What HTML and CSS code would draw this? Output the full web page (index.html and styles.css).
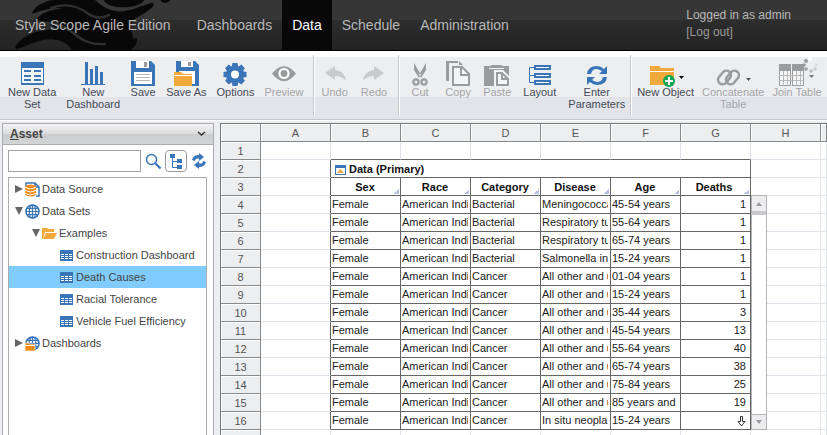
FILE: index.html
```html
<!DOCTYPE html>
<html lang="en">
<head>
<meta charset="utf-8">
<title>Style Scope Agile Edition</title>
<link rel="stylesheet" href="styles.css">
</head>
<body>
<svg class="defs" aria-hidden="true">
  <symbol id="sheet" viewBox="0 0 13 11"><path fill="#3a75b8" d="M0 0h13v11H0z"/><path stroke="#fff" d="M1 4.5h11M1 6.5h11M1 8.5h11" /><path stroke="#3a75b8" d="M4.5 4v6M8.500 4v6"/></symbol>
  <symbol id="globe" viewBox="0 0 15 15"><circle cx="7.500" cy="7.500" r="6.500" fill="#fff" stroke="#3a75b8" stroke-width="1.600"/><path fill="none" stroke="#3a75b8" stroke-width="1.200" d="M7.500 1v13M1 7.500h13M2 4.300h11M2 10.700h11"/><ellipse cx="7.500" cy="7.500" rx="3.300" ry="6.500" fill="none" stroke="#3a75b8" stroke-width="1.200"/></symbol>
</svg>

<header class="top">
  <svg class="emblem" width="180" height="50" viewBox="0 0 540 150" aria-hidden="true">
    <path d="M97 36C112 10 145 0 182-4L280-4C296 10 322 32 352 34C392 36 428 14 456 8C466 10 462 20 452 26C430 44 408 52 398 62C390 80 396 98 400 116L411 114C414 130 402 142 392 150L216 150C206 134 188 120 156 118C112 118 84 138 52 147C44 148 44 140 50 134C70 108 104 90 170 88C150 66 124 58 104 64C120 38 152 28 186 26C156 22 126 32 104 39C98 40 95 40 97 36Z"/>
    <path d="M310-4C312 14 340 22 370 22C404 22 430 12 434-4ZM480-2C484 12 506 12 512-2Z"/>
    <path class="streak" d="M150 25C200 6 240 22 266 42C288 58 310 54 330 44M104 72C150 62 190 76 216 96C244 120 270 136 318 132"/>
  </svg>
  <span class="brand">Style Scope Agile Edition</span>
  <nav class="menu">
    <a href="#">Dashboards</a><a href="#" class="current">Data</a><a href="#">Schedule</a><a href="#">Administration</a>
  </nav>
  <div class="account"><span>Logged in as admin</span><a href="#">[Log out]</a></div>
</header>

<div class="toolbar" role="toolbar">
  <div class="group file">
    <button class="tool" type="button"><svg width="24" height="26" viewBox="0 0 24 26"><path fill="#3a75b8" d="M1 2h23v23H1z"/><path fill="#f3f5f7" d="M2 8h21v15H2z"/><path stroke="#3a75b8" stroke-width="2" d="M4 11h7M14 11h7M4 16h7M14 16h7M4 20h7M14 20h7"/></svg>New Data<br>Set</button>
    <button class="tool" type="button"><svg width="26" height="26" viewBox="0 0 26 26"><path fill="#3a75b8" d="M1 24h24v1H1zM5 2h3v22H5zM10 9h3v15h-3zM15 6h3v18h-3zM20 12h3v12h-3z"/></svg>New<br>Dashboard</button>
    <button class="tool" type="button"><svg width="26" height="26" viewBox="0 0 26 26"><path fill="#3a75b8" d="M1 1h20l4 4v21H1z"/><path fill="#fff" d="M6 1h13v7H6zM4 12h18v12H4z"/><path fill="#999" d="M14 2h3v5h-3z"/><path stroke="#b5b7b8" d="M6 14.500h14M6 17.500h14M6 20.500h14"/></svg>Save</button>
    <button class="tool" type="button"><svg width="26" height="26" viewBox="0 0 26 26"><path fill="#3a75b8" d="M3 1h19l4 4v21H3z"/><path fill="#fff" d="M8 1h12v6H8zM6 11h16v13H6z"/><path fill="#999" d="M15 2h3v4h-3z"/><path fill="#f2a93b" d="M1 12h7l2 2h9v12H1z"/><path stroke="#fff" d="M1 15.500h18"/></svg>Save As</button>
    <button class="tool" type="button"><svg width="24" height="26" viewBox="0 0 24 26"><g fill="#3a75b8"><circle cx="12" cy="14.500" r="8.500"/><path id="cog" d="M9.500 3h5l1 5h-7zM9.500 26h5l1-5h-7z"/><use href="#cog" transform="rotate(45 12 14.500)"/><use href="#cog" transform="rotate(90 12 14.500)"/><use href="#cog" transform="rotate(135 12 14.500)"/></g><circle cx="12" cy="14.500" r="4" fill="#fff"/></svg>Options</button>
    <button class="tool" type="button" disabled><svg width="24" height="26" viewBox="0 0 24 26"><path fill="#999b9c" d="M0 13.500Q12-1 24 13.500Q12 29 0 13.500z"/><circle cx="12" cy="13.500" r="4.500" fill="none" stroke="#fff" stroke-width="2.200"/></svg>Preview</button>
  </div>
  <div class="group history">
    <button class="tool" type="button" disabled><svg width="24" height="26" viewBox="0 0 24 26"><path id="bend" fill="#c9cacc" d="M2 13L12 6v4q10 1 11 11q-4-5-11-5v4z"/></svg>Undo</button>
    <button class="tool" type="button" disabled><svg width="24" height="26" viewBox="0 0 24 26"><use href="#bend" transform="matrix(-1 0 0 1 24 0)"/></svg>Redo</button>
  </div>
  <div class="group edit">
    <button class="tool" type="button" disabled><svg width="18" height="26" viewBox="0 0 18 26"><path fill="#999b9c" d="M3 3l7 12-2 3-5-8zM15 3L8 15l2 3 5-8z"/><g fill="none" stroke="#999b9c" stroke-width="2.200"><circle cx="5" cy="22" r="2.600"/><circle cx="13" cy="22" r="2.600"/></g></svg>Cut</button>
    <button class="tool" type="button" disabled><svg width="26" height="26" viewBox="0 0 26 26"><path fill="#999b9c" d="M1 1h12v2H4v18H1zM14 1l4 4h-4z"/><path fill="#f3f4f5" stroke="#999b9c" stroke-width="2" d="M8 7h9l7 7v11H8z"/><path fill="none" stroke="#999b9c" stroke-width="2" d="M16 6v9h9"/></svg>Copy</button>
    <button class="tool" type="button" disabled><svg width="26" height="26" viewBox="0 0 26 26"><path fill="#999b9c" d="M0 6h6l2-1h9l2 1h6v20H0z"/><path stroke="#f3f4f5" d="M5 8.500h15"/><path fill="#f3f4f5" d="M10 10h9l7 7v9H10z"/><path fill="#f3f4f5" stroke="#999b9c" stroke-width="2" d="M13 13h5l6 6v6H13z"/><path fill="none" stroke="#999b9c" stroke-width="2" d="M18 13v6h6"/></svg>Paste</button>
    <button class="tool" type="button"><svg width="24" height="26" viewBox="0 0 24 26"><g fill="#fff" stroke="#3a75b8" stroke-width="2"><path d="M7 6h15v3H7zM7 14h15v3H7zM7 21h15v3H7z"/></g><path fill="none" stroke="#3a75b8" d="M6 7.500H1.500v15H6M2 15.500h4"/></svg>Layout</button>
    <button class="tool" type="button"><svg width="24" height="26" viewBox="0 0 24 26"><path id="swirl" fill="#3a75b8" d="M2 14Q3 6 12 6q4 0 7 3l3-3v8h-8l3-3q-9-5-11 3z"/><use href="#swirl" transform="rotate(180 12 15.500)"/></svg>Enter<br>Parameters</button>
  </div>
  <div class="group objects">
    <button class="tool" type="button"><svg width="36" height="26" viewBox="0 0 36 26"><path fill="#f2a93b" d="M2 6h9l2 2h13v17H2z"/><path stroke="#fff" d="M2 11.500h24"/><circle cx="21" cy="21" r="6" fill="#0aa64f"/><path stroke="#fff" stroke-width="2" d="M17 21h8M21 17v8"/><path d="M31 16h5l-2.500 3z"/></svg>New Object</button>
    <button class="tool" type="button" disabled><svg width="36" height="26" viewBox="0 0 36 26"><g fill="none" stroke="#999b9c" stroke-width="2.500"><rect x="2" y="13" width="15" height="9" rx="4.500" transform="rotate(-50 9.500 17.500)"/><rect x="10" y="13" width="15" height="9" rx="4.500" transform="rotate(-50 17.500 17.500)"/></g><path fill="#555" d="M31 18h5l-2.500 3z"/></svg>Concatenate<br>Table</button>
    <button class="tool" type="button" disabled><svg width="36" height="26" viewBox="0 0 36 26"><path fill="#999b9c" d="M0 4h12v22H0zM13 4h12v22H13z"/><path fill="#f5f5f5" d="M1 11h10v14H1zM14 11h10v14H14z"/><path stroke="#b6b8b9" d="M4.500 11v15M8.500 11v15M17.500 11v15M21.500 11v15M0 15.500h25M0 20.500h25"/><path fill="#777" d="M30 15h5l-2.500 3z"/><g fill="#999b9c"><circle cx="27" cy="1" r="2"/><circle cx="25" cy="5" r="1.800"/><circle cx="27" cy="9" r="1.800"/><circle cx="32" cy="11" r="1.800" fill="#bbb"/><circle cx="36" cy="9" r="1.800" fill="#ccc"/><circle cx="37" cy="5" r="1.800" fill="#ddd"/><circle cx="31" cy="-1" r="2" fill="#fff"/></g></svg>Join Table</button>
  </div>
</div>

<main class="work">
  <aside class="asset">
    <h2 class="asset-title"><span><u>A</u>sset</span><svg width="9" height="6" viewBox="0 0 9 6" aria-hidden="true"><path fill="none" stroke="#333" stroke-width="1.500" d="M1 1l3.500 3L8 1"/></svg></h2>
    <div class="asset-body">
      <form class="search">
        <input type="text" aria-label="Search assets">
        <button type="button" class="icon-btn" aria-label="Search"><svg width="17" height="17" viewBox="0 0 17 17"><circle cx="6.500" cy="6.500" r="5" fill="none" stroke="#3a75b8" stroke-width="1.500"/><path stroke="#3a75b8" stroke-width="2.200" d="M10.500 10.500l5 5"/></svg></button>
        <button type="button" class="icon-btn framed" aria-label="Tree view"><svg width="16" height="16" viewBox="0 0 16 16"><path fill="#3a75b8" d="M2 1h5v4H2zM9 6h5v4H9zM9 12h5v4H9z"/><path fill="none" stroke="#3a75b8" d="M4.500 5v9.500H9M4.500 8.500H9"/></svg></button>
        <button type="button" class="icon-btn" aria-label="Refresh"><svg width="16" height="16" viewBox="0 0 16 16"><path id="spin" fill="#3a75b8" d="M1 7Q2 2 8 2V0l5 4-5 4V5.500Q4 5 4 8z"/><use href="#spin" transform="rotate(180 8 8)"/></svg></button>
      </form>
      <ul class="tree">
        <li><svg class="twist" viewBox="0 0 8 8"><path d="M0 0l8 4-8 4z"/></svg><svg class="kind" viewBox="0 0 15 15"><path fill="#fff" stroke="#3a75b8" stroke-width="1.500" d="M1 4V1h9l4 4v9h-3M10 1v4h4"/><path fill="#f08a13" d="M0 4q5-3 11 0v9q-5 3-11 0z"/><path fill="none" stroke="#fff" d="M0 5.500q5 3 11 0M0 8.500q5 3 11 0M0 11.500q5 3 11 0"/></svg>Data Source</li>
        <li><svg class="twist" viewBox="0 0 8 8"><path d="M0 0h8L4 8z"/></svg><svg class="kind"><use href="#globe"/></svg>Data Sets</li>
        <li class="level2"><svg class="twist" viewBox="0 0 8 8"><path d="M0 0h8L4 8z"/></svg><svg class="kind" viewBox="0 0 15 15"><path fill="#f2a93b" d="M0 2h5l1 1h6v3H3l-2 7H0z"/><path fill="#f2a93b" d="M4 7h11l-3 6H1z"/></svg>Examples</li>
        <li class="level3"><svg class="leaf"><use href="#sheet"/></svg>Construction Dashboard</li>
        <li class="level3 selected"><svg class="leaf"><use href="#sheet"/></svg>Death Causes</li>
        <li class="level3"><svg class="leaf"><use href="#sheet"/></svg>Racial Tolerance</li>
        <li class="level3"><svg class="leaf"><use href="#sheet"/></svg>Vehicle Fuel Efficiency</li>
        <li><svg class="twist" viewBox="0 0 8 8"><path d="M0 0l8 4-8 4z"/></svg><svg class="kind" viewBox="0 0 15 15"><use href="#globe"/><path fill="#f08a13" stroke="#fff" stroke-width=".6" d="M0 7h4l1 1h5v7H0z"/><path stroke="#fff" d="M0 9.500h10"/></svg>Dashboards</li>
      </ul>
    </div>
  </aside>

  <section class="sheet">
    <table>
      <colgroup><col class="num"><col class="c"><col class="c"><col class="c"><col class="c"><col class="c"><col class="c"><col class="c"><col class="c"><col></colgroup>
      <thead><tr><th></th><th>A</th><th>B</th><th>C</th><th>D</th><th>E</th><th>F</th><th>G</th><th>H</th><th></th></tr></thead>
      <tbody>
        <tr class="above"><th>1</th><td></td><td></td><td></td><td></td><td></td><td></td><td></td><td></td><td></td></tr>
        <tr class="data"><th>2</th><td></td><td colspan="6" class="caption"><svg width="11" height="10" viewBox="0 0 11 10"><path fill="#3a75b8" d="M0 0h11v10H0z"/><path fill="#fff" d="M1 3h9v6H1z"/><path fill="#f2a93b" d="M2 8l3.500-4L9 8z"/></svg>Data (Primary)</td><td></td><td></td></tr>
        <tr class="data fields"><th>3</th><td></td><td>Sex</td><td>Race</td><td>Category</td><td>Disease</td><td>Age</td><td>Deaths</td><td></td><td></td></tr>
        <tr class="data"><th>4</th><td></td><td><div>Female</div></td><td><div>American Indi</div></td><td><div>Bacterial</div></td><td><div>Meningococca</div></td><td><div>45-54 years</div></td><td><div>1</div></td><td class="rail"><div class="scroll"><button type="button" aria-label="Scroll up"><svg width="6" height="4" viewBox="0 0 6 4"><path fill="#999" d="M0 4l3-4 3 4z"/></svg></button><button type="button" aria-label="Scroll down"><svg width="6" height="4" viewBox="0 0 6 4"><path fill="#999" d="M0 0h6L3 4z"/></svg></button></div></td><td></td></tr>
        <tr class="data"><th>5</th><td></td><td><div>Female</div></td><td><div>American Indi</div></td><td><div>Bacterial</div></td><td><div>Respiratory tu</div></td><td><div>55-64 years</div></td><td><div>1</div></td><td></td><td></td></tr>
        <tr class="data"><th>6</th><td></td><td><div>Female</div></td><td><div>American Indi</div></td><td><div>Bacterial</div></td><td><div>Respiratory tu</div></td><td><div>65-74 years</div></td><td><div>1</div></td><td></td><td></td></tr>
        <tr class="data"><th>7</th><td></td><td><div>Female</div></td><td><div>American Indi</div></td><td><div>Bacterial</div></td><td><div>Salmonella inf</div></td><td><div>15-24 years</div></td><td><div>1</div></td><td></td><td></td></tr>
        <tr class="data"><th>8</th><td></td><td><div>Female</div></td><td><div>American Indi</div></td><td><div>Cancer</div></td><td><div>All other and u</div></td><td><div>01-04 years</div></td><td><div>1</div></td><td></td><td></td></tr>
        <tr class="data"><th>9</th><td></td><td><div>Female</div></td><td><div>American Indi</div></td><td><div>Cancer</div></td><td><div>All other and u</div></td><td><div>15-24 years</div></td><td><div>1</div></td><td></td><td></td></tr>
        <tr class="data"><th>10</th><td></td><td><div>Female</div></td><td><div>American Indi</div></td><td><div>Cancer</div></td><td><div>All other and u</div></td><td><div>35-44 years</div></td><td><div>3</div></td><td></td><td></td></tr>
        <tr class="data"><th>11</th><td></td><td><div>Female</div></td><td><div>American Indi</div></td><td><div>Cancer</div></td><td><div>All other and u</div></td><td><div>45-54 years</div></td><td><div>13</div></td><td></td><td></td></tr>
        <tr class="data"><th>12</th><td></td><td><div>Female</div></td><td><div>American Indi</div></td><td><div>Cancer</div></td><td><div>All other and u</div></td><td><div>55-64 years</div></td><td><div>40</div></td><td></td><td></td></tr>
        <tr class="data"><th>13</th><td></td><td><div>Female</div></td><td><div>American Indi</div></td><td><div>Cancer</div></td><td><div>All other and u</div></td><td><div>65-74 years</div></td><td><div>38</div></td><td></td><td></td></tr>
        <tr class="data"><th>14</th><td></td><td><div>Female</div></td><td><div>American Indi</div></td><td><div>Cancer</div></td><td><div>All other and u</div></td><td><div>75-84 years</div></td><td><div>25</div></td><td></td><td></td></tr>
        <tr class="data"><th>15</th><td></td><td><div>Female</div></td><td><div>American Indi</div></td><td><div>Cancer</div></td><td><div>All other and u</div></td><td><div>85 years and</div></td><td><div>19</div></td><td></td><td></td></tr>
        <tr class="data"><th>16</th><td></td><td><div>Female</div></td><td><div>American Indi</div></td><td><div>Cancer</div></td><td><div>In situ neoplas</div></td><td><div>15-24 years</div></td><td><div><svg width="9" height="12" viewBox="0 0 9 12"><path fill="#fff" stroke="#333" d="M3.500 1.500h2v5h2.500L4.500 11 1 6.500h2.500z"/></svg></div></td><td></td><td></td></tr>
        <tr><th></th><td></td><td></td><td></td><td></td><td></td><td></td><td></td><td></td><td></td></tr>
      </tbody>
    </table>
  </section>
</main>
</body>
</html>
```
FILE: styles.css
```css
* { box-sizing: border-box; }

body {
  margin: 0;
  height: 100vh;
  overflow: hidden;
  display: flex;
  flex-direction: column;
  background: #ecedf0;
  color: #333;
  font: 11px/12px "Liberation Sans", Arial, sans-serif;
}

button { font: inherit; color: inherit; border: 0; padding: 0; background: none; }
a { color: inherit; text-decoration: none; }
.defs { position: absolute; width: 0; height: 0; }

/* Top bar */
.top {
  position: relative;
  flex: none;
  display: flex;
  height: 51px;
  border-bottom: 1px solid #000;
  background: linear-gradient(#363636 0 40%, #2d2d2d 40%, #232323);
  color: #b8b8b8;
  font-size: 14px;
  line-height: 50px;
}
.emblem { position: absolute; left: 0; top: 0; fill: #080808; }
.streak { fill: none; stroke: #303030; stroke-width: 7; }
.brand { position: relative; padding: 0 16px 0 15px; }
.menu { display: flex; }
.menu a { padding: 0 10px; }
.menu .current { background: #080808; color: #fff; }
.account {
  display: flex;
  flex-direction: column;
  margin-left: auto;
  padding: 7px 36px 0 0;
  font-size: 12px;
  line-height: 17px;
}
.account a { color: #999; }

/* Toolbar */
.toolbar {
  flex: none;
  display: flex;
  height: 69px;
  padding-top: 4px;
  border-bottom: 1px solid #c6c6ca;
  background: linear-gradient(#fff 0 6px, #edeef0 6px 46px, #e3e4e9 46px);
}
.group {
  flex: none;
  display: flex;
  align-items: flex-start;
  height: 60px;
  padding: 5px 9px 0 8px;
  border-right: 1px solid #c6c6ca;
  box-shadow: 1px 0 #fff;
}
.file { gap: 10px; }
.history { gap: 13px; padding-right: 11px; }
.edit { gap: 12px; padding-right: 5px; }
.objects { gap: 8px; padding: 5px 0 0 6px; border: 0; box-shadow: none; }
.tool { min-width: 26px; white-space: nowrap; text-align: center; color: #444a58; }
.tool svg { display: block; margin: 0 auto; overflow: visible; }
.tool:disabled { color: #a4a5a8; }

/* Work area */
.work { flex: 1; min-height: 0; display: flex; gap: 6px; padding: 2px 0 0 2px; border-top: 1px solid #fff; overflow: hidden; }

.asset {
  flex: none;
  display: flex;
  flex-direction: column;
  width: 212px;
  border: 1px solid #aaabae;
  border-bottom: 0;
  background: #fff;
}
.asset-title {
  display: flex;
  justify-content: space-between;
  align-items: center;
  height: 21px;
  margin: 0;
  padding: 0 7px;
  border-bottom: 1px solid #aaabae;
  background: linear-gradient(#f4f4f5, #dadbdc 50%, #cbcccd 50%, #d3d4d5);
  font-size: 12px;
  color: #444;
}
.asset-body { flex: 1; display: flex; flex-direction: column; gap: 5px; padding: 5px 6px 0 5px; }
.search { display: flex; align-items: center; gap: 4px; margin: 0; }
.search input { flex: 1; min-width: 0; height: 22px; border: 1px solid #a2a3a5; background: #fff; font: inherit; }
.icon-btn { display: grid; place-items: center; width: 16px; height: 22px; }
.icon-btn svg { overflow: visible; }
.framed { width: 22px; border: 1px solid #9a9b9d; border-radius: 4px; }

.tree { flex: 1; margin: 0; padding: 0; list-style: none; border: 1px solid #aaabae; border-bottom: 0; }
.tree li { display: flex; align-items: center; gap: 2px; height: 22px; padding-left: 6px; color: #444; }
.tree .level2 { padding-left: 23px; }
.tree .level3 { padding-left: 51px; gap: 3px; }
.tree .selected { background: #80ccff; }
.twist { width: 8px; height: 8px; fill: #666; }
.kind { width: 15px; height: 15px; }
.leaf { width: 13px; height: 11px; }

/* Worksheet */
.sheet { flex: 1; min-width: 0; border: 1px solid #77787a; border-width: 1px 0 0 1px; background: #fff; }
table { width: 100%; table-layout: fixed; border-spacing: 0; }
.num { width: 40px; }
.c { width: 70px; }
th, td { height: 18px; padding: 0; border: 1px solid #e2e2ea; border-width: 0 1px 1px 0; line-height: 16px; }
th { background: #edeef0; border-color: #88898b; font-weight: normal; color: #555; box-shadow: inset 1px 1px #fff; }
td { color: #222; }
.above td:nth-child(n+3):nth-child(-n+8) { border-bottom-color: #666; }
.data td:nth-child(n+3):nth-child(-n+8) { border-color: #666; padding: 0 2px 0 1px; }
.data td:nth-child(2) { border-right-color: #666; }
.data td:nth-child(8):nth-child(n) { text-align: right; padding-right: 4px; }
.data div { overflow: hidden; white-space: nowrap; height: 17px; }
.data td svg { vertical-align: middle; }
.data td.caption { font-weight: bold; color: #111; }
.data td.caption:nth-child(n) { padding-left: 4px; }
.data .caption ~ td:nth-child(n) { border-color: #e2e2ea; }
.caption svg { margin-right: 3px; }
.fields td:nth-child(n+3):nth-child(-n+8) {
  text-align: center;
  font-weight: bold;
  color: #111;
  background: linear-gradient(135deg, transparent 50%, #b9c2e0 50%) right 1px bottom 1px / 5px 5px no-repeat;
}

.rail { position: relative; }
.data .scroll {
  position: absolute;
  left: 0;
  top: -1px;
  display: flex;
  flex-direction: column;
  justify-content: space-between;
  width: 16px;
  height: 235px;
  border: 1px solid #b3b4b6;
  background: #fff;
}
.scroll button { display: grid; place-items: center; height: 15px; background: #ededef; }
.scroll button:first-child { height: 19px; border-bottom: 4px solid #c8c9cb; }
.scroll button:last-child { border-top: 1px solid #b3b4b6; }
```
